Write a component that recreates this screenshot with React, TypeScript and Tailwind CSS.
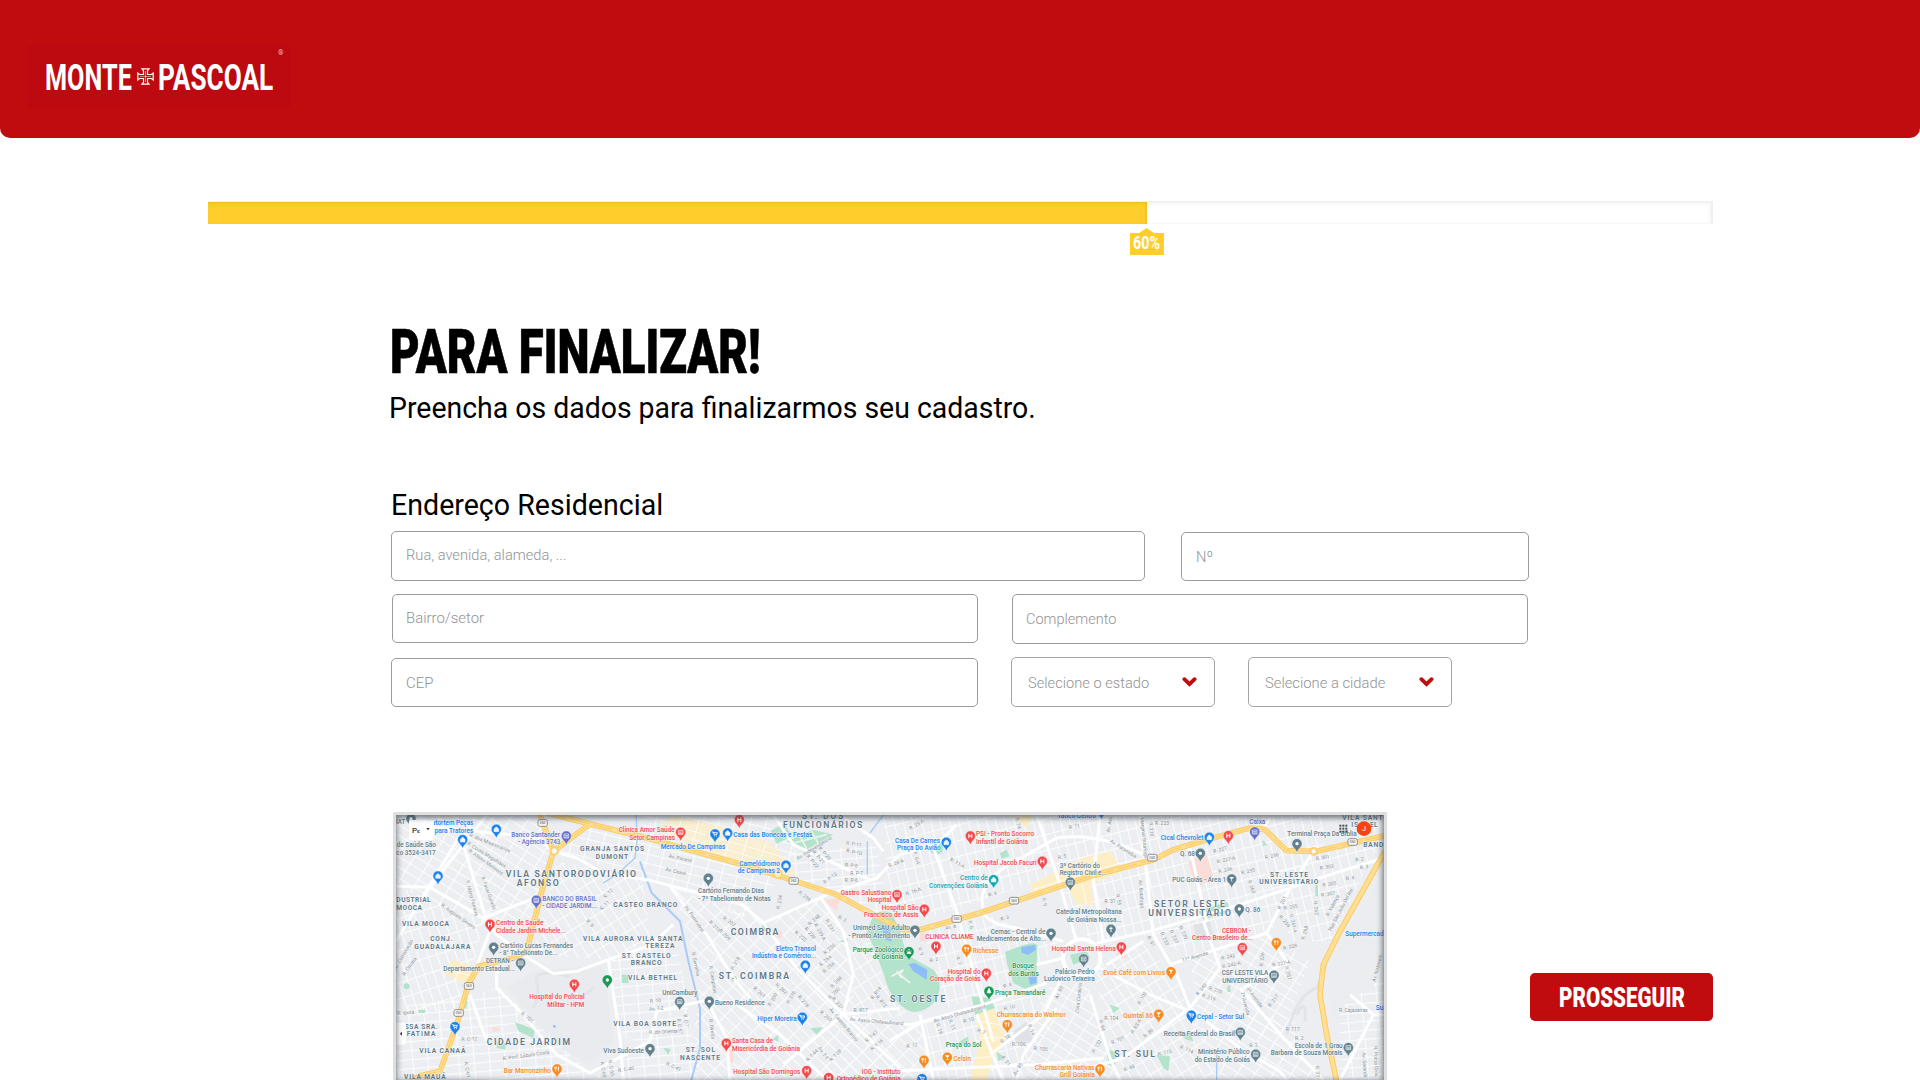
import { useLayoutEffect, useRef, useState, type ReactNode } from "react";

/* Text condensed or widened horizontally to an exact width. */
function Fit({ width, className = "", children }: { width: number; className?: string; children: ReactNode }) {
  const ref = useRef<HTMLSpanElement>(null);
  const [scale, setScale] = useState(1);
  useLayoutEffect(() => {
    if (ref.current) setScale(width / ref.current.offsetWidth);
  }, [width]);
  return (
    <span className="block" style={{ width }}>
      <span
        ref={ref}
        className={`inline-block origin-left whitespace-nowrap align-top ${className}`}
        style={{ transform: `scaleX(${scale})` }}
      >
        {children}
      </span>
    </span>
  );
}

function Logo() {
  return (
    <div className="mt-[45px] ml-[28px] flex h-[63px] w-[263px] items-start bg-[#bc0a10] pl-[16px] text-white">
      <Fit width={87} className="mt-[12px] ml-px text-[36px] leading-[42px] font-bold">MONTE</Fit>
      <svg className="mt-[23px] ml-[6px] h-[17px] w-[17px]" viewBox="0 0 17 17" fill="none" stroke="white" strokeWidth="1.2">
        <path d="M5 .8H12L10.500 2.600V6.500H14.400L16.200 5V12L14.400 10.500H10.500V14.400L12 16.200H5L6.500 14.400V10.500H2.600L.8 12V5L2.600 6.500H6.500V2.600Z" />
        <path d="M8.500 3V14M3 8.500H14" strokeWidth=".5" />
      </svg>
      <Fit width={115} className="mt-[12px] ml-[4px] text-[36px] leading-[42px] font-bold">PASCOAL</Fit>
      <span className="mt-[4px] ml-[9px] text-[7px] leading-[8px] font-bold text-[#f0b9bb]">®</span>
    </div>
  );
}

function Field({ text, width, className }: { text: string; width: number; className: string }) {
  return (
    <div className={`flex items-center rounded-[5px] border border-[#9b9b9b] bg-white text-[#939393] ${className}`}>
      <Fit width={width} className="mt-[2px] text-[15.500px] leading-[20px] font-light">{text}</Fit>
    </div>
  );
}

function Select({ text, width, className = "" }: { text: string; width: number; className?: string }) {
  return (
    <div className={`flex h-[50px] w-[204px] items-center justify-between rounded-[5px] border border-[#a5a5a5] pr-[17px] pl-[16px] text-[#939393] ${className}`}>
      <Fit width={width} className="mt-[3px] text-[15.500px] leading-[20px] font-light">{text}</Fit>
      <svg className="-mt-[1px] h-[10px] w-[15px]" viewBox="0 0 15 10" fill="none" stroke="#c00c0e" strokeWidth="3.800" strokeLinecap="round">
        <path d="M2.400 2.200 7.500 7.200 12.600 2.200" />
      </svg>
    </div>
  );
}

/* ---------- Map (one unit is a third of a pixel) ---------- */

const RED = "#f4484b";
const BLUE = "#1a82ee";
const GREY = "#62818e";
const ORANGE = "#f78b22";
const GREEN = "#169a55";
const TEAL = "#0fa9b6";
const INDIGO = "#6470c8";
const AREA = "#607889";
const STREET = "#8b9399";

type Label = [string, number, number, number, string?];

const places: Label[] = [
  ["IAT", 18, 46, 48, GREY],
  ["atortem Peças", 126, 250, 52, BLUE],
  ["para Tratores", 134, 250, 74, BLUE],
  ["de Saúde São", 20, 138, 118, GREY],
  ["co 3524-3417", 19, 137, 140, GREY],
  ["Banco Santander", 364, 510, 87, INDIGO],
  ["- Agência 3743", 384, 511, 109, INDIGO],
  ["BANCO DO BRASIL", 457, 620, 278, INDIGO],
  ["- CIDADE JARDIM...", 457, 620, 301, INDIGO],
  ["Centro de Saúde", 318, 460, 351, RED],
  ["Cidade Jardim Michele...", 318, 527, 374, RED],
  ["Cartório Lucas Fernandes", 330, 549, 420, GREY],
  ["- 8° Tabelionato De...", 328, 502, 442, GREY],
  ["DETRAN -", 288, 370, 466, GREY],
  ["Departamento Estadual...", 160, 375, 488, GREY],
  ["Hospital do Policial", 418, 584, 574, RED],
  ["Militar - HPM", 472, 583, 596, RED],
  ["Bar Marronzinho", 341, 483, 794, ORANGE],
  ["Viva Sudoeste", 640, 762, 735, GREY],
  ["Clínica Amor Saúde", 686, 854, 73, RED],
  ["Setor Campinas", 718, 855, 95, RED],
  ["Casa das Bonecas e Festas", 1030, 1267, 87, BLUE],
  ["Mercado De Campinas", 812, 1006, 124, BLUE],
  ["Camelódromo", 1048, 1170, 174, BLUE],
  ["de Campinas 2", 1043, 1170, 196, BLUE],
  ["Cartório Fernando Dias", 924, 1122, 256, GREY],
  ["- 7º Tabelionato de Notas", 924, 1142, 278, GREY],
  ["Gastro Salustiano", 1352, 1504, 261, RED],
  ["Hospital", 1433, 1504, 283, RED],
  ["Hospital São", 1475, 1586, 305, RED],
  ["Francisco de Assis", 1422, 1586, 327, RED],
  ["Unimed SAU Adulto", 1389, 1560, 367, GREY],
  ["- Pronto Atendimento", 1375, 1560, 390, GREY],
  ["Parque Zoológico", 1388, 1540, 432, GREEN],
  ["de Goiânia", 1448, 1540, 453, GREEN],
  ["Eletro Transol", 1158, 1278, 428, BLUE],
  ["Indústria e Comércio...", 1086, 1278, 450, BLUE],
  ["UniCambury", 817, 922, 561, GREY],
  ["Bueno Residence", 975, 1124, 592, GREY],
  ["Hiper Moreira", 1102, 1220, 638, BLUE],
  ["Santa Casa de", 1026, 1149, 705, RED],
  ["Misericórdia de Goiânia", 1026, 1230, 728, RED],
  ["Hospital São Domingos", 1030, 1231, 799, RED],
  ["IOG - Instituto", 1415, 1532, 799, RED],
  ["Ortopédico de Goiânia", 1340, 1532, 818, RED],
  ["Casa De Carnes", 1515, 1650, 104, BLUE],
  ["Praça Do Avião", 1521, 1652, 127, BLUE],
  ["PSI - Pronto Socorro", 1758, 1932, 85, RED],
  ["Infantil de Goiânia", 1758, 1914, 107, RED],
  ["Tático Centro", 2002, 2118, 30, BLUE],
  ["Hospital Jacob Facuri", 1752, 1940, 170, RED],
  ["Centro de", 1710, 1793, 217, TEAL],
  ["Convenções Goiânia", 1617, 1793, 239, TEAL],
  ["3ª Cartório do", 2009, 2130, 180, GREY],
  ["Registro Civil e...", 2009, 2150, 202, GREY],
  ["Catedral Metropolitana", 1998, 2195, 319, GREY],
  ["de Goiânia Nossa...", 2031, 2195, 341, GREY],
  ["Cemac - Central de", 1802, 1966, 377, GREY],
  ["Medicamentos de Alto...", 1760, 1968, 399, GREY],
  ["CLINICA CLIAME", 1606, 1751, 392, RED],
  ["Richesse", 1748, 1825, 434, ORANGE],
  ["Hospital Santa Helena", 1985, 2177, 429, RED],
  ["Hospital do", 1673, 1772, 498, RED],
  ["Coração de Goiás", 1620, 1772, 520, RED],
  ["Bosque", 1867, 1932, 481, GREEN],
  ["dos Buritis", 1855, 1946, 503, GREEN],
  ["Palácio Pedro", 1995, 2114, 498, GREY],
  ["Ludovico Teixeira", 1962, 2114, 520, GREY],
  ["Evoé Café com Livros", 2140, 2325, 502, ORANGE],
  ["Praça Tamandaré", 1815, 1966, 561, GREEN],
  ["Churrascaria do Walmor", 1820, 2027, 628, ORANGE],
  ["Quintal 86", 2200, 2289, 630, ORANGE],
  ["Praça do Sol", 1667, 1774, 718, GREEN],
  ["Celsin", 1690, 1743, 760, ORANGE],
  ["Churrascaria Nativas", 1935, 2114, 785, ORANGE],
  ["Grill Goiânia", 2009, 2114, 807, ORANGE],
  ["Caixa", 2578, 2626, 49, INDIGO],
  ["Cical Chevrolet", 2312, 2440, 97, BLUE],
  ["Terminal Praça Da Bíblia", 2692, 2900, 84, GREY],
  ["Q. 68", 2370, 2415, 145, GREY],
  ["PUC Goiás - Área 1", 2347, 2508, 223, GREY],
  ["Q. 86", 2566, 2611, 313, GREY],
  ["CEBROM -", 2496, 2583, 374, RED],
  ["Centro Brasileiro de...", 2406, 2589, 396, RED],
  ["Supermercado", 2866, 2992, 384, BLUE],
  ["CSF LESTE VILA", 2495, 2635, 502, GREY],
  ["UNIVERSITÁRIO", 2497, 2634, 524, GREY],
  ["Cepal - Setor Sul", 2421, 2562, 632, BLUE],
  ["Receita Federal do Brasil", 2321, 2535, 683, GREY],
  ["Ministério Público", 2424, 2579, 739, GREY],
  ["do Estado de Goiás", 2414, 2580, 761, GREY],
  ["Escola de 1 Grau", 2714, 2858, 719, GREY],
  ["Barbara de Souza Morais", 2642, 2857, 741, GREY],
  ["Su", 2957, 2980, 606, BLUE],
];

const areas: Label[] = [
  ["GRANJA SANTOS", 570, 762, 130],
  ["DUMONT", 617, 714, 153],
  ["DUSTRIAL", 19, 122, 283],
  ["MOOCA", 19, 96, 305],
  ["VILA MOOCA", 36, 177, 353],
  ["CONJ.", 121, 187, 398],
  ["GUADALAJARA", 73, 241, 422],
  ["CASTEO BRANCO", 670, 862, 297],
  ["VILA AURORA", 579, 732, 398],
  ["VILA SANTA", 742, 877, 398],
  ["TEREZA", 766, 853, 420],
  ["ST. CASTELO", 695, 842, 450],
  ["BRANCO", 722, 815, 472],
  ["VILA BETHEL", 714, 861, 516],
  ["VILA BOA SORTE", 670, 858, 654],
  ["SSA SRA.", 44, 143, 662],
  ["FATIMA", 50, 136, 684],
  ["VILA CANAÃ", 88, 226, 734],
  ["VILA MAUÁ", 42, 167, 814],
  ["ST. SOL", 887, 975, 733],
  ["NASCENTE", 870, 990, 755],
  ["ST. LESTE", 2640, 2754, 206],
  ["UNIVERSITARIO", 2608, 2785, 228],
  ["VILA SANT", 2857, 2978, 35],
  ["IS", 2884, 2904, 57],
  ["EL", 2940, 2963, 57],
  ["BAND", 2920, 2980, 117],
];

const bigAreas: Label[] = [
  ["VILA SANTORODOVIÁRIO", 347, 738, 206],
  ["AFONSO", 380, 506, 234],
  ["CIDADE JARDIM", 290, 540, 712],
  ["ST. DOS", 1235, 1360, 34],
  ["FUNCIONÁRIOS", 1179, 1417, 61],
  ["COIMBRA", 1022, 1165, 382],
  ["ST. COIMBRA", 986, 1197, 514],
  ["ST. OESTE", 1500, 1666, 583],
  ["SETOR LESTE", 2292, 2505, 296],
  ["UNIVERSITÁRIO", 2275, 2523, 324],
  ["ST. SUL", 2173, 2295, 746],
];

/* text, centre x, centre y, angle */
const streets: [string, number, number, number][] = [
  ["R. dos Missionários", 300, 105, 22], ["R. Couto Magalhães", 290, 140, 32], ["R. Albino Menezes", 288, 162, 35],
  ["R. Mário Ferreira", 246, 270, 75], ["R. Fausi Gurado", 296, 255, 70], ["R. Augusto Severo", 205, 325, 35],
  ["Av. Consolação", 40, 440, -60], ["R. Criciúa", 58, 475, -55], ["R. Iporá", 47, 614, -3], ["R. C-12", 238, 693, -3],
  ["R. Prof. Lázaro Costa", 408, 742, -8], ["R. 7D1", 412, 628, 38], ["R. C-40", 708, 784, -8], ["R. C-61", 232, 785, 80],
  ["R. 12", 654, 256, -45], ["R. 11", 644, 292, -45], ["R. 8", 600, 346, 45], ["R. C-50", 664, 780, 80], ["R. C-60", 640, 785, 80],
  ["Av. Paraná", 871, 151, 12], ["Av. Ceará", 857, 190, 12], ["Av. Perimetral", 913, 332, 55], ["R. 207", 1018, 340, 35],
  ["R. 215", 974, 355, 45], ["R. 209", 1004, 380, 45], ["R. 234", 1168, 282, -80], ["R. 236", 1244, 264, 38], ["R. 218", 1036, 466, -60],
  ["R. Serrinha", 917, 468, 78], ["R. Campinas", 969, 515, 80], ["R. 10", 796, 578, -5], ["Av. T-2", 799, 602, -6],
  ["R. do Oriente", 820, 671, -2], ["R. C-57", 869, 655, 82], ["R. C-7", 888, 638, 82], ["R. C-41", 851, 776, 25],
  ["R. Direita", 966, 663, 82], ["R. 261", 1108, 552, 40], ["R. 200", 1148, 575, -60], ["R. 262", 1174, 542, 42], ["R. 276", 1203, 568, -60],
  ["R. 278", 1240, 580, 50], ["R. 248", 1272, 336, -40], ["R. 231", 1320, 353, 62], ["R. 228", 1260, 375, 50], ["R. 239-A", 1290, 372, 60],
  ["R. 232", 1232, 385, 40], ["R. 250", 1318, 423, -40], ["R. 264", 1306, 458, -40], ["R. 256", 1316, 478, -40], ["R. 268", 1338, 522, -45],
  ["R. 260", 1332, 555, -45], ["R. 265", 1308, 624, 40], ["R. 237", 1343, 585, 50], ["R. R17", 1412, 607, 0], ["R. 3", 1357, 332, 30],
  ["Av. Castelo Branco", 1361, 650, 50], ["Av. Assis Chateaubriand", 1460, 640, 5], ["Av. Independência", 1272, 120, -32],
  ["R. P-11", 1392, 108, 8], ["R. P-10", 1392, 132, 12], ["R. P-8", 1384, 172, 5], ["R. P-7", 1400, 196, 0], ["R. P-6", 1384, 218, 0],
  ["R. P-13", 1320, 210, -35], ["R. P-22", 1268, 160, 50], ["R. P-21", 1286, 148, 50], ["R. P-20", 1304, 136, 50],
  ["R. T-47", 1444, 685, -40], ["R. T-16", 1460, 710, -40], ["R. T-28", 1336, 742, -45], ["R. T-44", 1266, 742, -45], ["Av. T-1", 1300, 735, 55],
  ["R. R14", 1458, 555, -50], ["R. R12", 1474, 580, 50],
  ["R. 25-A", 1580, 50, -30], ["R. 28-A", 1518, 165, -20], ["R. 11-A", 1702, 165, 30], ["R. 16-A", 1570, 250, -18], ["R. 6-A", 1580, 150, 75],
  ["R. 4", 1807, 258, -15], ["R. 3", 1844, 330, -15], ["R. 5", 2016, 146, -12], ["R. 74", 1884, 46, 75], ["R. 71", 2053, 56, -8],
  ["Av. Paranaíba", 2200, 122, 32], ["Av. Ara", 2158, 50, -80], ["Marginal Botafogo", 2262, 90, 84], ["R. 9", 1963, 282, 75],
  ["Av. A", 1682, 357, -8], ["R. 7", 1706, 458, 70], ["R. 6", 1742, 350, 75], ["R. 9", 1592, 430, 70], ["R. 2", 1632, 455, -15], ["R. 8", 1852, 532, -15],
  ["Av. Assis Chateaubriand", 1708, 617, -16], ["R. 10", 1858, 598, -12], ["R. 15", 1648, 662, 70], ["R. 11", 1686, 650, 70], ["R. 12", 1566, 712, -10],
  ["R. 10", 1736, 636, -15], ["R. 7", 1774, 670, 20], ["R. 14", 1924, 665, 70], ["R. 18", 1846, 692, -35], ["R. 106", 1886, 708, 0],
  ["R. 105", 1952, 722, 5], ["R. 21", 1848, 758, 50], ["Av. 85", 2007, 553, -65], ["Av. 85", 1884, 783, -60], ["Cora Coralina", 2066, 570, -84],
  ["R. 84", 2136, 652, 72], ["R. 104", 2164, 630, 0], ["R. 101", 2184, 696, -25], ["R. 132", 2120, 715, -60], ["R. 88", 2218, 780, -20],
  ["Av. Botafogo", 2254, 258, 86], ["R. 55", 2186, 275, 78], ["R. 31", 2160, 280, 0], ["R. 102", 2256, 570, -60], ["R. 83-A", 2238, 655, -60], ["R. 86", 2275, 675, -40],
  ["R. 223", 2316, 46, 0], ["R. 210", 2284, 64, 85], ["R. 227", 2490, 125, -15], ["R. 227-A", 2508, 155, -12], ["R. 236", 2506, 186, -12],
  ["R. 235", 2574, 190, -12], ["R. 236", 2645, 144, -12], ["R. 260", 2585, 236, 70], ["R. 301", 2798, 149, -8], ["R. 303", 2810, 177, -8],
  ["R. 305", 2818, 228, -10], ["R. 307", 2814, 258, -10], ["R. 3", 2922, 177, -8], ["R. 2", 2908, 154, -8], ["R. 4", 2880, 210, -8],
  ["R. 261", 2676, 284, -62], ["R. 255", 2702, 297, -10], ["R. 259", 2684, 340, 50], ["R. 261-A", 2710, 346, 75], ["R. 268", 2744, 374, -75],
  ["R. Valença", 2828, 292, -62], ["Rua São João Del Rei", 2852, 305, -62], ["R. 262", 2778, 300, 84], ["R. 228", 2700, 416, -12], ["R. 226", 2616, 454, -85],
  ["R. 242", 2514, 446, -12], ["R. 242-A", 2524, 470, -12], ["11ª Avenida", 2415, 446, -16], ["4ª Avenida", 2594, 568, 52], ["7ª Avenida", 2566, 587, 75],
  ["R. 243", 2434, 544, -50], ["R. 220", 2476, 546, 18], ["R. 219", 2456, 568, 18], ["R. 227-A", 2674, 466, -10], ["R. 257", 2694, 495, 75],
  ["R. 217", 2650, 578, -52], ["R. Cajazeiras", 2890, 607, 0], ["R. 117", 2708, 663, 0], ["R. 2", 2728, 690, 0], ["R. 2", 2590, 711, -8],
  ["R. 115", 2324, 734, -12], ["R. 114", 2390, 724, 25], ["R. 237", 2352, 386, 65], ["R. 233", 2324, 392, 65], ["R. 239", 2380, 374, 65], ["R. 91", 2283, 400, 65],
  ["R. Ponta Gros", 2958, 760, 88], ["Av. Sarandi", 2924, 770, 86], ["Av. Nazareth", 2962, 480, -75], ["R. 37", 2782, 790, 88],
];

/* centre x, centre y, colour, symbol */
const pins: [number, number, string, string][] = [
  [63, 32, GREY, "dot"], [319, 64, BLUE, "bag"], [218, 95, BLUE, "bag"], [144, 204, BLUE, "bag"], [529, 84, INDIGO, "card"], [439, 277, INDIGO, "card"],
  [300, 349, RED, "H"], [311, 418, GREY, "dot"], [392, 465, GREY, "card"], [553, 529, RED, "H"], [652, 516, GREEN, "dot"], [195, 656, BLUE, "cart"],
  [501, 783, ORANGE, "fork"], [780, 722, GREY, "dot"], [872, 73, RED, "card"], [975, 78, BLUE, "cart"], [1013, 75, BLUE, "bag"], [1048, 35, RED, "H"],
  [1188, 172, BLUE, "bag"], [955, 211, GREY, "dot"], [1521, 260, RED, "card"], [1603, 304, RED, "H"], [1575, 367, GREY, "dot"], [1246, 472, BLUE, "bag"],
  [869, 581, GREY, "card"], [958, 580, GREY, "dot"], [1237, 628, BLUE, "cart"], [1009, 706, RED, "H"], [1250, 788, RED, "H"], [1316, 809, RED, "H"],
  [1669, 103, BLUE, "bag"], [1741, 84, RED, "H"], [1957, 160, RED, "H"], [1811, 215, TEAL, "bag"], [2041, 223, GREY, "card"], [2163, 364, GREY, "cross"],
  [1983, 376, GREY, "dot"], [1638, 415, RED, "H"], [1730, 424, ORANGE, "fork"], [1557, 431, GREEN, "paw"], [2194, 417, RED, "H"], [2081, 453, GREY, "card"],
  [1789, 496, RED, "H"], [1797, 550, GREEN, "tree"], [1852, 650, ORANGE, "fork"], [1602, 757, ORANGE, "fork"], [1672, 748, ORANGE, "cup"], [1596, 812, BLUE, "cart"],
  [2130, 783, ORANGE, "fork"], [2343, 491, ORANGE, "cup"], [2306, 619, ORANGE, "cup"], [2458, 88, BLUE, "bag"], [2515, 83, RED, "H"], [2594, 72, INDIGO, "card"],
  [2431, 136, GREY, "dot"], [2721, 107, GREY, "dot"], [2525, 213, GREY, "cup"], [2548, 303, GREY, "dot"], [2557, 419, RED, "card"], [2659, 404, ORANGE, "fork"],
  [2652, 502, GREY, "card"], [2404, 622, BLUE, "cart"], [2551, 673, GREY, "card"], [2597, 739, GREY, "card"], [2875, 719, GREY, "card"], [2134, 8, BLUE, "dot"],
];

function Symbol({ kind }: { kind: string }) {
  switch (kind) {
    case "H":
      return <path d="M-4.500-6.500V6.500M4.500-6.500V6.500M-4.500 0H4.500" stroke="white" strokeWidth="3" />;
    case "bag":
      return <path d="M-7-2H7V7H-7ZM-3.500-2V-5Q0-9 3.500-5V-2" fill="white" fillOpacity=".9" stroke="white" strokeWidth="1.500" />;
    case "cart":
      return <path d="M-8-6H-5L-3 2H5L7-4H-5M-2 6h.1M4 6h.1" fill="none" stroke="white" strokeWidth="2.800" strokeLinecap="round" />;
    case "card":
      return <path d="M-7-6H7V6H-7ZM-5-1H5M-5 3H5" fill="none" stroke="white" strokeWidth="2" />;
    case "fork":
      return <path d="M-4-7V7M-6.500-7V-2H-1.500V-7M4 7V-7Q7-4 4 1" fill="none" stroke="white" strokeWidth="2.200" />;
    case "cup":
      return <path d="M-7-6H7L1 1V6H4V7H-4V6H-1V1Z" fill="white" />;
    case "cross":
      return <path d="M0-8V8M-5-3H5" stroke="white" strokeWidth="3" />;
    case "tree":
      return <path d="M0-9L6 4H-6ZM0 4V8" fill="white" stroke="white" strokeWidth="2" />;
    case "paw":
      return <path d="M-5 5Q0-4 5 5ZM-6-2h.1M-2-6h.1M2-6h.1M6-2h.1" fill="white" stroke="white" strokeWidth="3.200" strokeLinecap="round" />;
    default:
      return <circle r="5" fill="white" />;
  }
}

const grids: [string, string][] = [
  ["g35", "M18 21H440L480 130 420 330 290 350 18 235Z"],
  ["g70", "M18 235L280 340 250 480 200 600 18 640Z"],
  ["g5", "M18 600L230 560 330 540 600 795V816H18Z"],
  ["g55", "M500 160L760 215 780 400 655 455 430 440Z"],
  ["g5", "M655 455L780 410 860 400 930 816H600L780 710 700 690Z"],
  ["g15", "M600 60L760 100 1180 205 1060 330 850 240 490 130Z"],
  ["g15", "M760 21H1170L1220 110 1190 190 760 90Z"],
  ["g45", "M850 240L1100 330 1560 816H900L930 500Z"],
  ["g45", "M1150 330L1290 265 1390 400 1390 600 1340 660Z"],
  ["g5", "M1200 130L1460 110 1500 330 1300 250 1190 200Z"],
  ["g55", "M1390 400L1440 400 1500 560 1560 620 1390 640Z"],
  ["g45", "M1390 620L1590 650 1630 816H1250Z"],
  ["g75", "M1480 21H1950L2000 200 1590 340 1500 320Z"],
  ["g75", "M1600 370L1790 320 2020 410 1850 540 1670 600Z"],
  ["g75", "M1950 21H2260L2280 160 2290 380 2100 400 2000 220Z"],
  ["g75", "M1600 640L1960 530 1900 816H1630Z"],
  ["g35", "M1960 540L2090 520 2180 816H1900Z"],
  ["g55", "M2110 480L2250 400 2350 500 2400 620 2480 816H2180Z"],
  ["g75", "M2250 21H2800V120L2700 220 2640 380 2400 450 2280 380Z"],
  ["g35", "M2400 450L2640 380 2760 460 2700 620 2640 700 2420 600Z"],
  ["g75", "M2640 150L2970 100 2820 400 2700 400Z"],
  ["g35", "M2400 610L2700 620 2800 816H2480Z"],
  ["g5", "M2850 600L2992 500V816H2850Z"],
];

const roads = [
  "M18 235L120 238 280 330 320 380 400 440 490 497 560 490 655 455 780 412 850 350",
  "M100 55L440 88 490 130 560 150 640 195 780 217 850 235 1050 285 1120 345 1220 480 1350 610 1530 780",
  "M215 95L300 370 258 480M205 90L18 400M290 21L120 238M280 330L440 268M255 480L330 490M240 560L290 700",
  "M320 490L320 540 390 610 500 740 600 795 780 700 800 610 950 577 1030 582 1170 680 1310 816",
  "M655 455L690 690 700 816M840 235L950 380 1030 510 1080 570M950 577L1010 690 1020 816",
  "M1120 345L1300 265 1460 210 1530 140 1640 110 1700 50M1290 265L1360 370 1390 500 1360 620 1180 770",
  "M1150 21L1210 110 1440 215M1350 21L1450 90 1480 130M1530 600L1350 620M1390 630L1560 650 1600 640",
  "M1500 698L1600 640 1780 590 1970 525M1630 120L1700 310 1770 560 1810 700M1940 21L2000 200 2060 400M2100 560L2160 750 2190 816",
  "M1780 315Q1800 350 1880 360L2020 400M1780 300Q1760 240 1840 180L2000 90Q2130 70 2280 150",
  "M2120 405L2280 370 2550 290 2850 190 2982 150M1590 620L1630 816M1500 790L1940 770 2140 750M2000 600L1900 740 1880 816",
  "M2130 480L2280 560 2400 610M1940 470L2020 450M2150 470L2260 400M2140 400L2110 220 2130 21",
  "M2250 20L2290 380 2360 500 2400 600 2550 720 2670 790 2690 816M2340 470L2630 375 2700 240 2770 130",
  "M2440 340L2490 480 2400 600M2400 120L2450 340M2550 540L2680 690 2800 816M2850 816L2950 620 2880 560M2950 620H2992M2400 600L2200 750 2100 780",
  "M2640 30L2620 60M2630 375L2690 460 2560 540M2020 500L1960 620 1800 740M1840 820L1760 620",
];

const highway = [
  "M448 14L490 130 455 250 410 430 370 450 265 475 235 530 200 650 150 790 90 803 50 830",
  "M490 130L600 48M470 14L600 48 780 92 1050 168 1180 208 1340 260 1450 320 1540 365 1590 365 1770 315 2100 205 2290 155 2350 125 2450 95 2580 60 2625 65 2690 128 2780 130 2890 105 2990 82",
  "M2985 130L2850 370 2800 470 2790 560 2810 680 2842 830",
];

function TextRun({ items, size, weight, fill }: { items: Label[]; size: number; weight: number; fill?: string }) {
  return (
    <g fontSize={size} fontWeight={weight} paintOrder="stroke" stroke="#f4f6f7" strokeWidth="3" strokeLinejoin="round">
      {items.map(([t, x0, x1, y, c]) => (
        <text
          key={`${t}${x0}${y}`}
          x={x0}
          y={y}
          fill={fill ?? c}
          textLength={x1 - x0}
          lengthAdjust={fill ? "spacing" : "spacingAndGlyphs"}
        >
          {t}
        </text>
      ))}
    </g>
  );
}

function CityMap() {
  const angles: [string, number][] = [["g5", -5], ["g15", 14], ["g35", 32], ["g45", 45], ["g55", 58], ["g70", 72], ["g75", 76]];
  return (
    <svg className="block h-[265px] w-[988px]" viewBox="18 21 2964 795" preserveAspectRatio="none">
      <defs>
        {angles.map(([id, a]) => (
          <pattern key={id} id={id} width="46" height="27" patternUnits="userSpaceOnUse" patternTransform={`rotate(${a})`}>
            <path d="M0 1.500H46M1.500 0V27" stroke="#fbfcfd" strokeWidth="3.500" />
          </pattern>
        ))}
        <path id="pin" d="M0-15A15 15 0 0 1 15 0C15 10 4 14 0 26C-4 14-15 10-15 0A15 15 0 0 1 0-15Z" />
      </defs>
      <rect x="18" y="21" width="2964" height="795" fill="#eceef1" />
      <path d="M430 490L640 470 670 700 600 770 510 720 400 600 350 540Z" fill="#e9ebee" />
      <path d="M2850 400L2982 200V600L2830 640 2810 500Z" fill="#ebedf0" />
      {grids.map(([g, d], i) => (
        <path key={i} d={d} fill={`url(#${g})`} />
      ))}
      <g fill="#fdeec5">
        <path d="M185 455L270 480 235 530 165 500Z" />
        <path d="M850 21L1060 70 1150 110 1220 200 1150 205 1040 160 900 110 800 60Z" opacity=".75" />
        <path d="M1920 230L2080 150 2160 130 2200 190 2100 230 2110 290 2060 290 2030 230 1930 260Z" />
        <path d="M1755 600L1810 600 1850 700 1810 750 1790 816H1740L1770 700Z" />
        <path d="M1860 21L1930 21 1910 60Z" />
      </g>
      <g fill="none" strokeWidth="3" stroke="white" opacity=".8">
        <path d="M840 50L1190 150M860 80L1180 175M880 21L850 100M930 30L900 125M980 40L950 140M1030 55L1000 155M1080 70L1050 170M1130 100L1100 185" />
        <path d="M1930 245L2190 165M2060 160L2090 290M2110 145L2130 220M1760 640L1830 650M1770 690L1850 690M1760 750L1810 745M190 490L250 505M215 465L195 515" />
      </g>
      <g fill="#fadcd9">
        <path d="M2395 160L2450 140 2470 205 2430 235 2405 200Z" />
        <path d="M1300 275L1350 270 1340 310Z" />
        <path d="M1005 725L1030 725 1030 765 1015 760Z" />
        <path d="M1590 375H1610V400H1590ZM2180 430H2210V450H2180ZM1150 370H1175V390H1150Z" />
        <path d="M305 660l20-5 5 12-20 6ZM2210 725l20-5 5 15-20 5Z" />
      </g>
      <path d="M1870 670L1910 640 1930 700 1880 710ZM2410 350L2460 340 2470 380 2420 390Z" fill="#dfe2e7" />
      <g fill="#b4e3cb">
        <path d="M1452 318Q1490 300 1508 320L1530 370 1550 440 1630 485Q1665 530 1635 580 1600 620 1560 610 1500 580 1482 500L1452 420 1430 370Z" />
        <path d="M1845 432L1890 415Q1930 400 1942 410L1940 480 1943 530 1910 545 1870 525 1852 470Z" />
        <path d="M1142 68L1185 45 1205 85 1160 108ZM1190 100L1270 65 1330 80 1240 130Z" />
        <path d="M375 642L435 665 430 690 385 670ZM320 700L350 705 345 725 320 720ZM695 500L715 500 715 525 695 525Z" />
        <circle cx="50" cy="535" r="9" />
        <path d="M220 570L232 580 228 602 218 598ZM85 605H105V615H85Z" />
        <path d="M1745 565L1800 570 1815 600 1755 620ZM1710 700L1735 685 1735 710 1700 715Z" />
        <path d="M2425 310L2510 282 2525 308 2440 335Z" />
        <path d="M2150 730Q2165 720 2180 740L2175 775 2155 770ZM2040 440L2090 430 2100 450 2050 470Z" />
        <path d="M2300 740L2340 745 2335 790 2320 780ZM2160 590L2190 600 2170 615ZM2370 680L2400 670 2410 700 2390 695Z" />
        <path d="M1830 135L1850 125 1858 145 1835 152ZM1820 730L1845 750 1825 760ZM2618 95L2632 110 2618 115ZM2776 230h8v35h-8ZM1115 352q15-10 25 10l-20 10Z" />
        <circle cx="1032" cy="512" r="9" />
        <circle cx="1224" cy="481" r="6" />
        <circle cx="1640" cy="120" r="20" />
        <circle cx="2696" cy="242" r="6" />
        <path d="M1260 660L1300 658 1280 680ZM1145 695L1165 680 1165 700ZM1345 402L1375 390 1370 402ZM2512 535L2520 530 2522 552H2512ZM820 720L842 722 835 740Z" />
      </g>
      <path d="M1505 505L1540 485 1530 500 1560 525M1520 490L1535 510M1200 108L1310 80M1230 85L1250 122M1265 70L1285 108" stroke="#eef3f1" strokeWidth="5" fill="none" />
      <g fill="#8fbdf9">
        <path d="M1473 350L1500 355 1505 400 1485 395ZM1555 468L1575 465 1612 485 1610 515 1570 490Z" />
        <path d="M1893 418L1935 410 1938 425 1915 440 1895 435ZM1915 505H1940V525L1920 530Z" />
        <circle cx="493" cy="655" r="4" />
      </g>
      <g fill="none" stroke="#a9cbf7" strokeWidth="4">
        <path d="M738 21L742 90 735 150 680 200 640 225" />
        <path d="M750 160L785 255 870 340 895 460 930 600 930 720 900 830" strokeWidth="6" />
        <path d="M1480 21L1440 75M1432 100V200M2252 21L2260 90M2480 740V830" />
      </g>
      <path d="M430 600Q450 560 440 520T540 505M480 560Q560 590 610 540M2690 680Q2720 560 2780 540L2810 470M2720 620Q2750 560 2745 640" fill="none" stroke="#e1e4e8" strokeWidth="9" />
      <g fill="none" stroke="white" strokeWidth="9" strokeLinejoin="round">
        {roads.map((d, i) => (
          <path key={i} d={d} />
        ))}
        <circle cx="2075" cy="450" r="56" strokeWidth="12" />
      </g>
      <g fill="none" strokeLinejoin="round">
        {highway.map((d, i) => (
          <path key={`e${i}`} d={d} stroke="#fbcb62" strokeWidth="17" />
        ))}
        {highway.map((d, i) => (
          <path key={`m${i}`} d={d} stroke="#ffdf94" strokeWidth="11" />
        ))}
        {highway.slice(0, 2).map((d, i) => (
          <path key={`c${i}`} d={d} stroke="#fbc653" strokeWidth="2.500" strokeDasharray="60 12" />
        ))}
        <circle cx="493" cy="129" r="11" fill="#f5f6f7" stroke="#fbcf6b" strokeWidth="6" />
        <circle cx="2771" cy="130" r="10" fill="#f5f6f7" stroke="#fbcf6b" strokeWidth="6" />
        <circle cx="1163" cy="198" r="12" fill="#fdeec5" stroke="#fbcf6b" strokeWidth="5" />
      </g>
      {[[458, 45], [237, 534], [206, 615], [1211, 219], [1872, 278], [1700, 333], [2287, 149], [2888, 102]].map(([x, y]) => (
        <g key={x}>
          <rect x={x - 14} y={y - 10} width="28" height="20" rx="5" fill="#f5f5f5" stroke="#7b7f83" strokeWidth="2.500" />
          <text x={x} y={y + 4} fontSize="10" textAnchor="middle" fill="#555">060</text>
        </g>
      ))}
      <g fontSize="15" fill={STREET} textAnchor="middle" paintOrder="stroke" stroke="#f4f6f7" strokeWidth="2">
        {streets.map(([t, x, y, a], i) => (
          <text key={i} transform={`translate(${x} ${y}) rotate(${a})`} y="5">{t}</text>
        ))}
      </g>
      <TextRun items={areas} size={20} weight={600} fill={AREA} />
      <TextRun items={bigAreas} size={26} weight={600} fill={AREA} />
      <TextRun items={places} size={21.5} weight={500} />
      {pins.map(([x, y, c, k], i) => (
        <g key={i} transform={`translate(${x} ${y})`}>
          <use href="#pin" fill={c} stroke="white" strokeOpacity=".6" strokeWidth="1.500" />
          <Symbol kind={k} />
        </g>
      ))}
      <rect x="57" y="36" width="75" height="61" rx="3" fill="white" />
      <text x="66" y="74" fontSize="24" fill="#333" fontWeight="500">P<tspan fontSize="16">ε</tspan></text>
      <path d="M109 60H119L114 67Z" fill="#333" />
      <path d="M18 644H40Q48 644 48 652V702Q48 710 40 710H18Z" fill="white" />
      <path d="M36 671V683L29 677Z" fill="#444" />
      <g fill="#4c5054">
        {[2851, 2860, 2869].map((x) => [53, 62, 71].map((y) => <rect key={`${x}-${y}`} x={x - 3} y={y - 3} width="6" height="6" />))}
      </g>
      <circle cx="2922" cy="62" r="22" fill="#f9440f" />
      <text x="2922" y="70" fontSize="22" fill="white" textAnchor="middle">J</text>
    </svg>
  );
}

export default function App() {
  return (
    <div className="h-[1080px] w-[1920px] overflow-hidden bg-white font-['Roboto',sans-serif] text-black">
      <header className="flex h-[138px] items-start rounded-b-[10px] bg-[#c00c0e]">
        <Logo />
      </header>

      <section className="mt-[63px] ml-[208px] w-[1505px]">
        <div className="h-[23px] border-t-2 border-r-2 border-b border-t-[#f1f1f1] border-r-[#efefef] border-b-[#f8f8f8] shadow-[inset_-2px_2px_3px_rgba(0,0,0,0.03)]">
          <div className="-mt-px h-[22px] w-[939px] bg-[#ffce2c] shadow-[inset_-1px_1px_3px_rgba(200,140,0,0.3)]" />
        </div>
        <div className="mt-[4px] ml-[921px] flex w-[35px] flex-col items-center">
          <svg className="h-[5px] w-[15px]" viewBox="0 0 15 5"><path d="M0 5 7.500 0 15 5Z" fill="#ffce2c" /></svg>
          <div className="flex h-[22px] w-[34px] items-center justify-center bg-[#ffce2c] text-white">
            <Fit width={27} className="text-[17.500px] leading-[22px] font-bold">60%</Fit>
          </div>
        </div>
      </section>

      <main className="mt-[67px] ml-[391px]">
        <h1>
          <Fit width={371} className="-ml-px text-[61px] leading-[60px] font-black [-webkit-text-stroke:0.7px_black]">PARA FINALIZAR!</Fit>
        </h1>
        <p className="mt-[6px]">
          <Fit width={647} className="-ml-[2px] text-[29px] leading-[40px]">Preencha os dados para finalizarmos seu cadastro.</Fit>
        </p>
        <h2 className="mt-[57px]">
          <Fit width={272} className="text-[29px] leading-[40px]">Endereço Residencial</Fit>
        </h2>

        <form className="mt-[6px] w-[1140px]">
          <div className="flex items-start">
            <Field text="Rua, avenida, alameda, ..." width={160} className="h-[50px] w-[754px] pb-[2px] pl-[14px]" />
            <Field text="Nº" width={17} className="mt-px ml-[36px] h-[49px] w-[348px] pl-[14px]" />
          </div>
          <div className="mt-[13px] ml-px flex items-start">
            <Field text="Bairro/setor" width={78} className="h-[49px] w-[586px] pb-px pl-[13px]" />
            <Field text="Complemento" width={90} className="ml-[34px] h-[50px] w-[516px] pl-[13px]" />
          </div>
          <div className="mt-[13px] flex items-start">
            <Field text="CEP" width={27} className="mt-px h-[49px] w-[587px] pl-[14px]" />
            <Select text="Selecione o estado" width={121} className="ml-[33px]" />
            <Select text="Selecione a cidade" width={120} className="ml-[33px]" />
          </div>
        </form>

        <div className="mt-[105px] ml-[2px] flex items-start">
          <div className="relative w-[994px] rounded-t-[2px] border-x-3 border-t-3 border-[#dfdfe0]">
            <CityMap />
            <div className="pointer-events-none absolute inset-0 shadow-[inset_0_4px_5px_rgba(50,60,70,0.45),inset_3px_0_5px_rgba(50,60,70,0.22),inset_-3px_0_5px_rgba(50,60,70,0.35)]" />
          </div>
          <button type="button" className="mt-[161px] ml-[143px] flex h-[48px] w-[183px] items-center justify-center rounded-[5px] bg-[#c00c0e] text-white">
            <Fit width={126} className="mt-px text-[28px] leading-[34px] font-black">PROSSEGUIR</Fit>
          </button>
        </div>
      </main>
    </div>
  );
}
